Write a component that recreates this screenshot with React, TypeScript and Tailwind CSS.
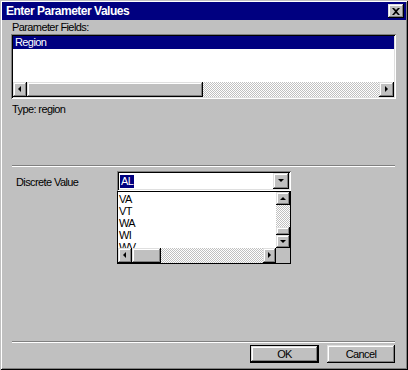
import React from "react";

const raised =
  "bg-[#c0c0c0] shadow-[inset_-1px_-1px_#000000,inset_1px_1px_#dfdfdf,inset_-2px_-2px_#808080,inset_2px_2px_#ffffff]";
const sunken =
  "shadow-[inset_1px_1px_#808080,inset_-1px_-1px_#ffffff,inset_2px_2px_#000000,inset_-2px_-2px_#dfdfdf]";
const checker =
  "bg-[repeating-conic-gradient(#c0c0c0_0%_25%,#ffffff_0%_50%)] bg-[length:2px_2px]";

function Arrow({ dir }: { dir: "left" | "right" | "up" | "down" }) {
  const pts: Record<string, string> = {
    left: "3,0 3,6 0,3",
    right: "0,0 0,6 3,3",
    up: "0,3 6,3 3,0",
    down: "0,0 6,0 3,3",
  };
  const w = dir === "left" || dir === "right" ? 4 : 7;
  const h = dir === "left" || dir === "right" ? 7 : 4;
  return (
    <svg width={w} height={h} viewBox={`0 0 ${w} ${h}`} className="block">
      <polygon points={pts[dir]} fill="#000" />
    </svg>
  );
}

function SBtn({ dir, w, h }: { dir: "left" | "right" | "up" | "down"; w: string; h: string }) {
  return (
    <div className={`${raised} ${w} ${h} flex items-center justify-center shrink-0`}>
      <Arrow dir={dir} />
    </div>
  );
}

export default function App() {
  return (
    <div
      className="w-[408px] h-[370px] bg-[#c0c0c0] p-[2px] flex flex-col text-[11px] text-black tracking-[-0.6px] shadow-[inset_1px_1px_#c0c0c0,inset_-1px_-1px_#000000,inset_2px_2px_#ffffff,inset_-2px_-2px_#808080]"
      style={{ fontFamily: "'Liberation Sans', Arial, sans-serif" }}
    >
      {/* Title bar */}
      <div className="h-[18px] bg-[#000080] flex items-center pl-[4px] pr-[2px] shrink-0">
        <span className="text-white font-bold text-[12px] leading-[13px] tracking-[-0.5px]">Enter Parameter Values</span>
        <div className={`${raised} ml-auto w-[16px] h-[14px] flex items-center justify-center`}>
          <svg width="8" height="7" viewBox="0 0 8 7" className="block">
            <path d="M0 0h2l2 2 2-2h2L5 3.5 8 7H6L4 5 2 7H0l3-3.5z" fill="#000" />
          </svg>
        </div>
      </div>

      <div className="flex flex-col pl-[10px]">
        <div className="h-[13px] leading-[13px] mt-[1px]">Parameter Fields:</div>

        {/* Listbox */}
        <div className={`${sunken} bg-white ml-[-1px] w-[385px] h-[65px] p-[2px] flex flex-col`}>
          <div className="h-[13px] leading-[13px] bg-[#000080] text-white pl-[2px]">Region</div>
          <div className="flex-1" />
          <div className="h-[15px] flex">
            <SBtn dir="left" w="w-[14px]" h="h-[15px]" />
            <div className={`${raised} w-[176px] h-[15px]`} />
            <div className={`${checker} flex-1`} />
            <SBtn dir="right" w="w-[15px]" h="h-[15px]" />
          </div>
        </div>

        <div className="h-[13px] leading-[13px] mt-[4px]">Type: region</div>

        {/* Separator */}
        <div className="mt-[49px] w-[383px] h-[2px] border-t border-t-[#808080] border-b border-b-white" />

        {/* Discrete value row */}
        <div className="mt-[4px] flex">
          <div className="ml-[4px] w-[101px] pt-[5px] leading-[13px]">Discrete Value</div>
          <div className="w-[174px] flex flex-col">
            <div className={`${sunken} bg-white h-[20px] p-[2px] flex items-center`}>
              <span className="ml-[1px] h-[13px] leading-[13px] bg-[#000080] text-white px-[1px]">AL</span>
              <div className={`${raised} ml-auto w-[16px] h-[16px] flex items-center justify-center`}>
                <Arrow dir="down" />
              </div>
            </div>
            <div className="h-[73px] border border-black bg-white flex flex-col">
              <div className="flex flex-1 min-h-0">
                <div className="flex-1 flex flex-col pl-[1px] pt-[1px] overflow-hidden">
                  {["VA", "VT", "WA", "WI", "WV"].map((s) => (
                    <div key={s} className="h-[12px] leading-[12px] shrink-0">
                      {s}
                    </div>
                  ))}
                </div>
                <div className="w-[14px] flex flex-col">
                  <SBtn dir="up" w="w-[14px]" h="h-[13px]" />
                  <div className={`${checker} flex-1`} />
                  <div className={`${raised} h-[8px]`} />
                  <SBtn dir="down" w="w-[14px]" h="h-[13px]" />
                </div>
              </div>
              <div className="h-[15px] flex shrink-0">
                <SBtn dir="left" w="w-[14px]" h="h-[15px]" />
                <div className={`${raised} w-[29px] h-[15px]`} />
                <div className={`${checker} flex-1`} />
                <SBtn dir="right" w="w-[13px]" h="h-[15px]" />
                <div className="w-[14px] bg-[#c0c0c0]" />
              </div>
            </div>
          </div>
        </div>

        {/* Bottom separator */}
        <div className="mt-[77px] w-[383px] h-[2px] border-t border-t-[#808080] border-b border-b-white" />

        {/* Buttons */}
        <div className="mt-[2px] flex justify-end gap-[8px] pr-[11px]">
          <div className="w-[69px] h-[18px] border border-black">
            <div className={`${raised} w-full h-full flex items-center justify-center leading-[13px]`}>OK</div>
          </div>
          <div className={`${raised} w-[68px] h-[18px] flex items-center justify-center leading-[13px]`}>Cancel</div>
        </div>
      </div>
    </div>
  );
}
